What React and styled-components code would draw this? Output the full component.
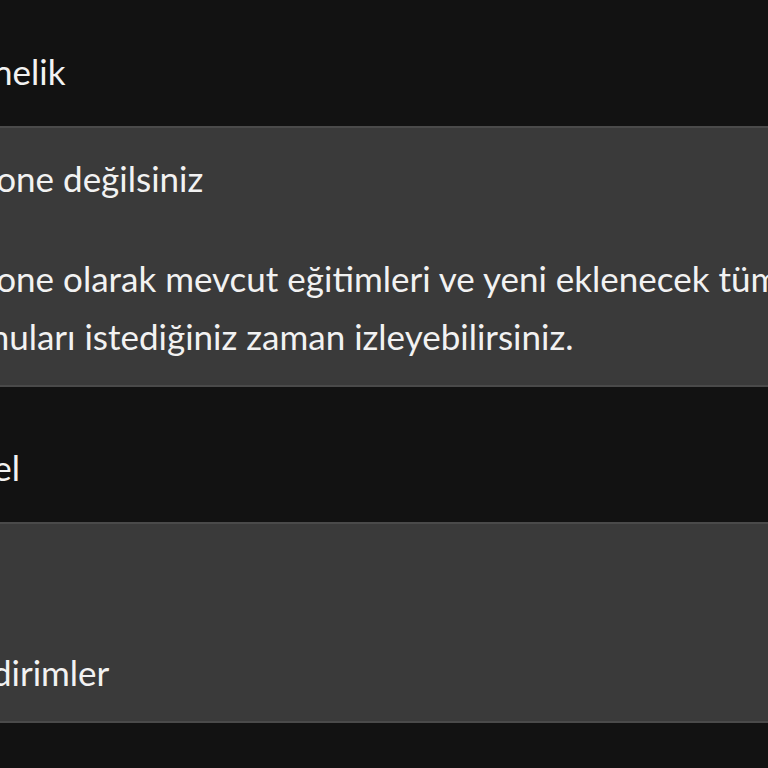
import React from 'react';
import styled, { createGlobalStyle } from 'styled-components';

const Global = createGlobalStyle`
  html, body {
    margin: 0;
    padding: 0;
    background: #121212;
    overflow: hidden;
  }
  body {
    font-family: Lato, "Open Sans", sans-serif;
    color: #f2f2f2;
  }
`;

const Page = styled.div`
  display: flex;
  flex-direction: column;
  width: 1100px;
  margin-left: -70px;
  margin-top: -9px;
`;

const SectionTitle = styled.h2`
  margin: 0;
  padding: 51px 0 26px 0;
  font-size: 35px;
  font-weight: 400;
  line-height: 58px;
`;

const Panel = styled.div`
  background: #3a3a3a;
  border-top: 2px solid #4a4a4a;
  border-bottom: 2px solid #4a4a4a;
  padding: ${p => p.$top || 19}px 0 20px 23px;
  font-size: 35px;
  line-height: 58px;
`;

const PanelTitle = styled.div`
  padding-top: 2px;
  margin-bottom: 42px;
`;

const Paragraph = styled.p`
  margin: 0;
  width: 880px;
`;

export default function App() {
  return (
    <>
      <Global />
      <Page>
        <SectionTitle>Abonelik</SectionTitle>
        <Panel>
          <PanelTitle>Abone değilsiniz</PanelTitle>
          <Paragraph>
            Abone olarak mevcut eğitimleri ve yeni eklenecek tüm konuları istediğiniz zaman izleyebilirsiniz.
          </Paragraph>
        </Panel>
        <SectionTitle>Genel</SectionTitle>
        <Panel $top={119}>
          Bildirimler
        </Panel>
      </Page>
    </>
  );
}
